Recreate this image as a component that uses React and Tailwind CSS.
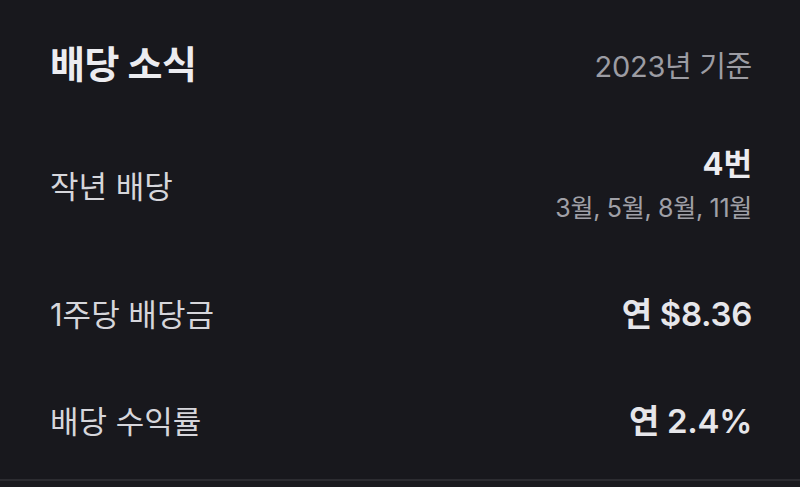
const rows = [
  { label: '1주당 배당금', value: '연 $8.36', gap: 'mt-[60px]' },
  { label: '배당 수익률', value: '연 2.4%', gap: 'mt-[47px]' },
];

export default function App() {
  return (
    <div
      className="w-[800px] h-[487px] overflow-hidden bg-[#18181d] flex flex-col"
      style={{ fontFamily: 'Inter, "Noto Sans CJK KR", sans-serif' }}
    >
      <div className="flex-1 pl-[50px] pr-[48px]">
        <div className="flex items-center justify-between h-[62px] mt-[33px]">
          <h2 className="text-[38px] font-bold text-[#ececf0] tracking-[-0.5px]">배당 소식</h2>
          <span className="text-[29px] text-[#9c9ca3] mt-[6px] tracking-[-0.3px]">2023년 기준</span>
        </div>

        <div className="flex items-center justify-between h-[82px] mt-[48px]">
          <span className="text-[31px] text-[#d6d6db] mt-[6px]">작년 배당</span>
          <div className="flex flex-col items-end mt-[10px]">
            <span className="text-[31px] font-bold text-[#ececf0] leading-[38px]">4번</span>
            <span className="text-[25px] text-[#a0a0a7] leading-[50px] tracking-[-0.3px]">3월, 5월, 8월, 11월</span>
          </div>
        </div>

        {rows.map((r) => (
          <div key={r.label} className={`flex items-center justify-between h-[60px] ${r.gap}`}>
            <span className="text-[31px] text-[#d6d6db]">{r.label}</span>
            <span className="text-[33px] font-semibold text-[#e6e6ea] tracking-[-0.3px]">{r.value}</span>
          </div>
        ))}
      </div>
      <div className="h-[8px] border-t-[2px] border-[#2c2c31] bg-[#1b1b20]" />
    </div>
  );
}
